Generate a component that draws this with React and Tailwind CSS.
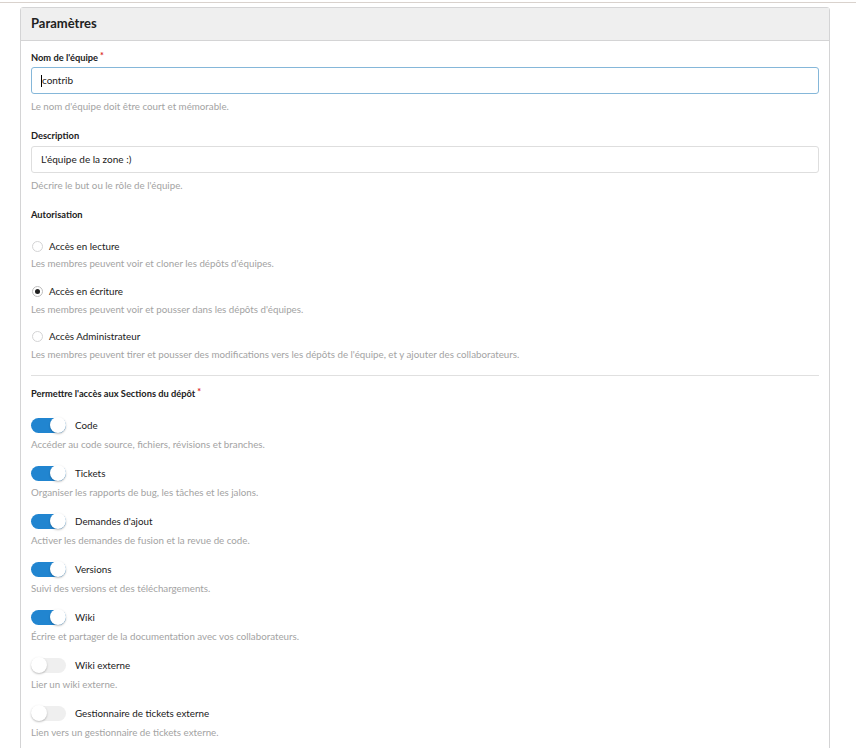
import React from 'react'

const sections = [
  { name: 'Code', help: 'Accéder au code source, fichiers, révisions et branches.', on: true },
  { name: 'Tickets', help: 'Organiser les rapports de bug, les tâches et les jalons.', on: true },
  { name: "Demandes d'ajout", help: 'Activer les demandes de fusion et la revue de code.', on: true },
  { name: 'Versions', help: 'Suivi des versions et des téléchargements.', on: true },
  { name: 'Wiki', help: 'Écrire et partager de la documentation avec vos collaborateurs.', on: true },
  { name: 'Wiki externe', help: 'Lier un wiki externe.', on: false },
  { name: 'Gestionnaire de tickets externe', help: 'Lien vers un gestionnaire de tickets externe.', on: false },
]

const Label = ({ children, required, className = '' }) => (
  <div className={`h-4 leading-[18px] text-[9.3px] font-bold text-[#212121] ${className}`}>
    {children}
    {required && <span className="text-[#db2828] text-[9px] align-top ml-[2px] relative -top-[2px]">*</span>}
  </div>
)

const Help = ({ children, className = '' }) => (
  <div className={`h-4 leading-4 text-[9.75px] text-[#a3a3a3] ${className}`}>{children}</div>
)

const Radio = ({ checked, label, className = '' }) => (
  <div className={`h-4 flex items-center ${className}`}>
    <span className={`ml-[1px] w-[11px] h-[11px] rounded-full border flex items-center justify-center ${checked ? 'border-[#bdbdbd]' : 'border-[#d4d4d5]'}`}>
      {checked && <span className="w-[5px] h-[5px] rounded-full bg-[#212121]" />}
    </span>
    <span className="ml-[6px] text-[9.8px] text-[#212121]">{label}</span>
  </div>
)

const Toggle = ({ on }) => (
  <span className={`relative w-[35px] h-[15px] rounded-full ${on ? 'bg-[#2185d0]' : 'bg-[#efefef]'}`}>
    <span className={`absolute -top-[0.5px] w-4 h-4 rounded-full bg-white shadow-[0_1px_2px_rgba(0,0,0,0.25)] ${on ? 'right-0' : 'left-0'}`} />
  </span>
)

export default function App() {
  return (
    <div className="min-h-screen bg-white" style={{ fontFamily: 'Lato, "Noto Sans", sans-serif' }}>
      <div className="h-[2px]" />
      <div className="h-px bg-[#d9d2cd]" />
      <div className="ml-5 mt-1 w-[810px] border border-[#d4d4d5] rounded-t-[3px]">
        <div className="h-[33px] bg-[#efefef] border-b border-[#d4d4d5] px-[10px] flex items-center">
          <span className="text-[13px] font-bold text-[#212121]">Paramètres</span>
        </div>
        <div className="px-[10px] pt-2 pb-6">
          <Label required>Nom de l'équipe</Label>
          <div className="mt-[2px] h-[27px] border border-[#85b7d9] rounded-[3px] flex items-center pl-[9px] text-[10px] text-[#212121]">
            <span className="w-px h-[12px] bg-black" />
            <span>contrib</span>
          </div>
          <Help className="mt-1">Le nom d'équipe doit être court et mémorable.</Help>

          <Label className="mt-[13px]">Description</Label>
          <div className="mt-[3px] h-[27px] border border-[#dedede] rounded-[3px] flex items-center pl-[9px] text-[10px] text-[#212121]">
            L'équipe de la zone :)
          </div>
          <Help className="mt-1">Décrire le but ou le rôle de l'équipe.</Help>

          <Label className="mt-[13px]">Autorisation</Label>
          <Radio className="mt-4" label="Accès en lecture" />
          <Help className="mt-px">Les membres peuvent voir et cloner les dépôts d'équipes.</Help>
          <Radio className="mt-3" checked label="Accès en écriture" />
          <Help className="mt-[2px]">Les membres peuvent voir et pousser dans les dépôts d'équipes.</Help>
          <Radio className="mt-[11px]" label="Accès Administrateur" />
          <Help className="mt-[2px]">Les membres peuvent tirer et pousser des modifications vers les dépôts de l'équipe, et y ajouter des collaborateurs.</Help>

          <div className="mt-[13px] h-px bg-[#e0e0e0]" />

          <Label required className="mt-[9px]">Permettre l'accès aux Sections du dépôt</Label>
          <div className="mt-4 flex flex-col gap-[13px]">
            {sections.map((s) => (
              <div key={s.name}>
                <div className="h-4 flex items-center">
                  <Toggle on={s.on} />
                  <span className="ml-[9px] text-[9.8px] text-[#212121]">{s.name}</span>
                </div>
                <Help className="mt-[3px]">{s.help}</Help>
              </div>
            ))}
          </div>
        </div>
      </div>
    </div>
  )
}
